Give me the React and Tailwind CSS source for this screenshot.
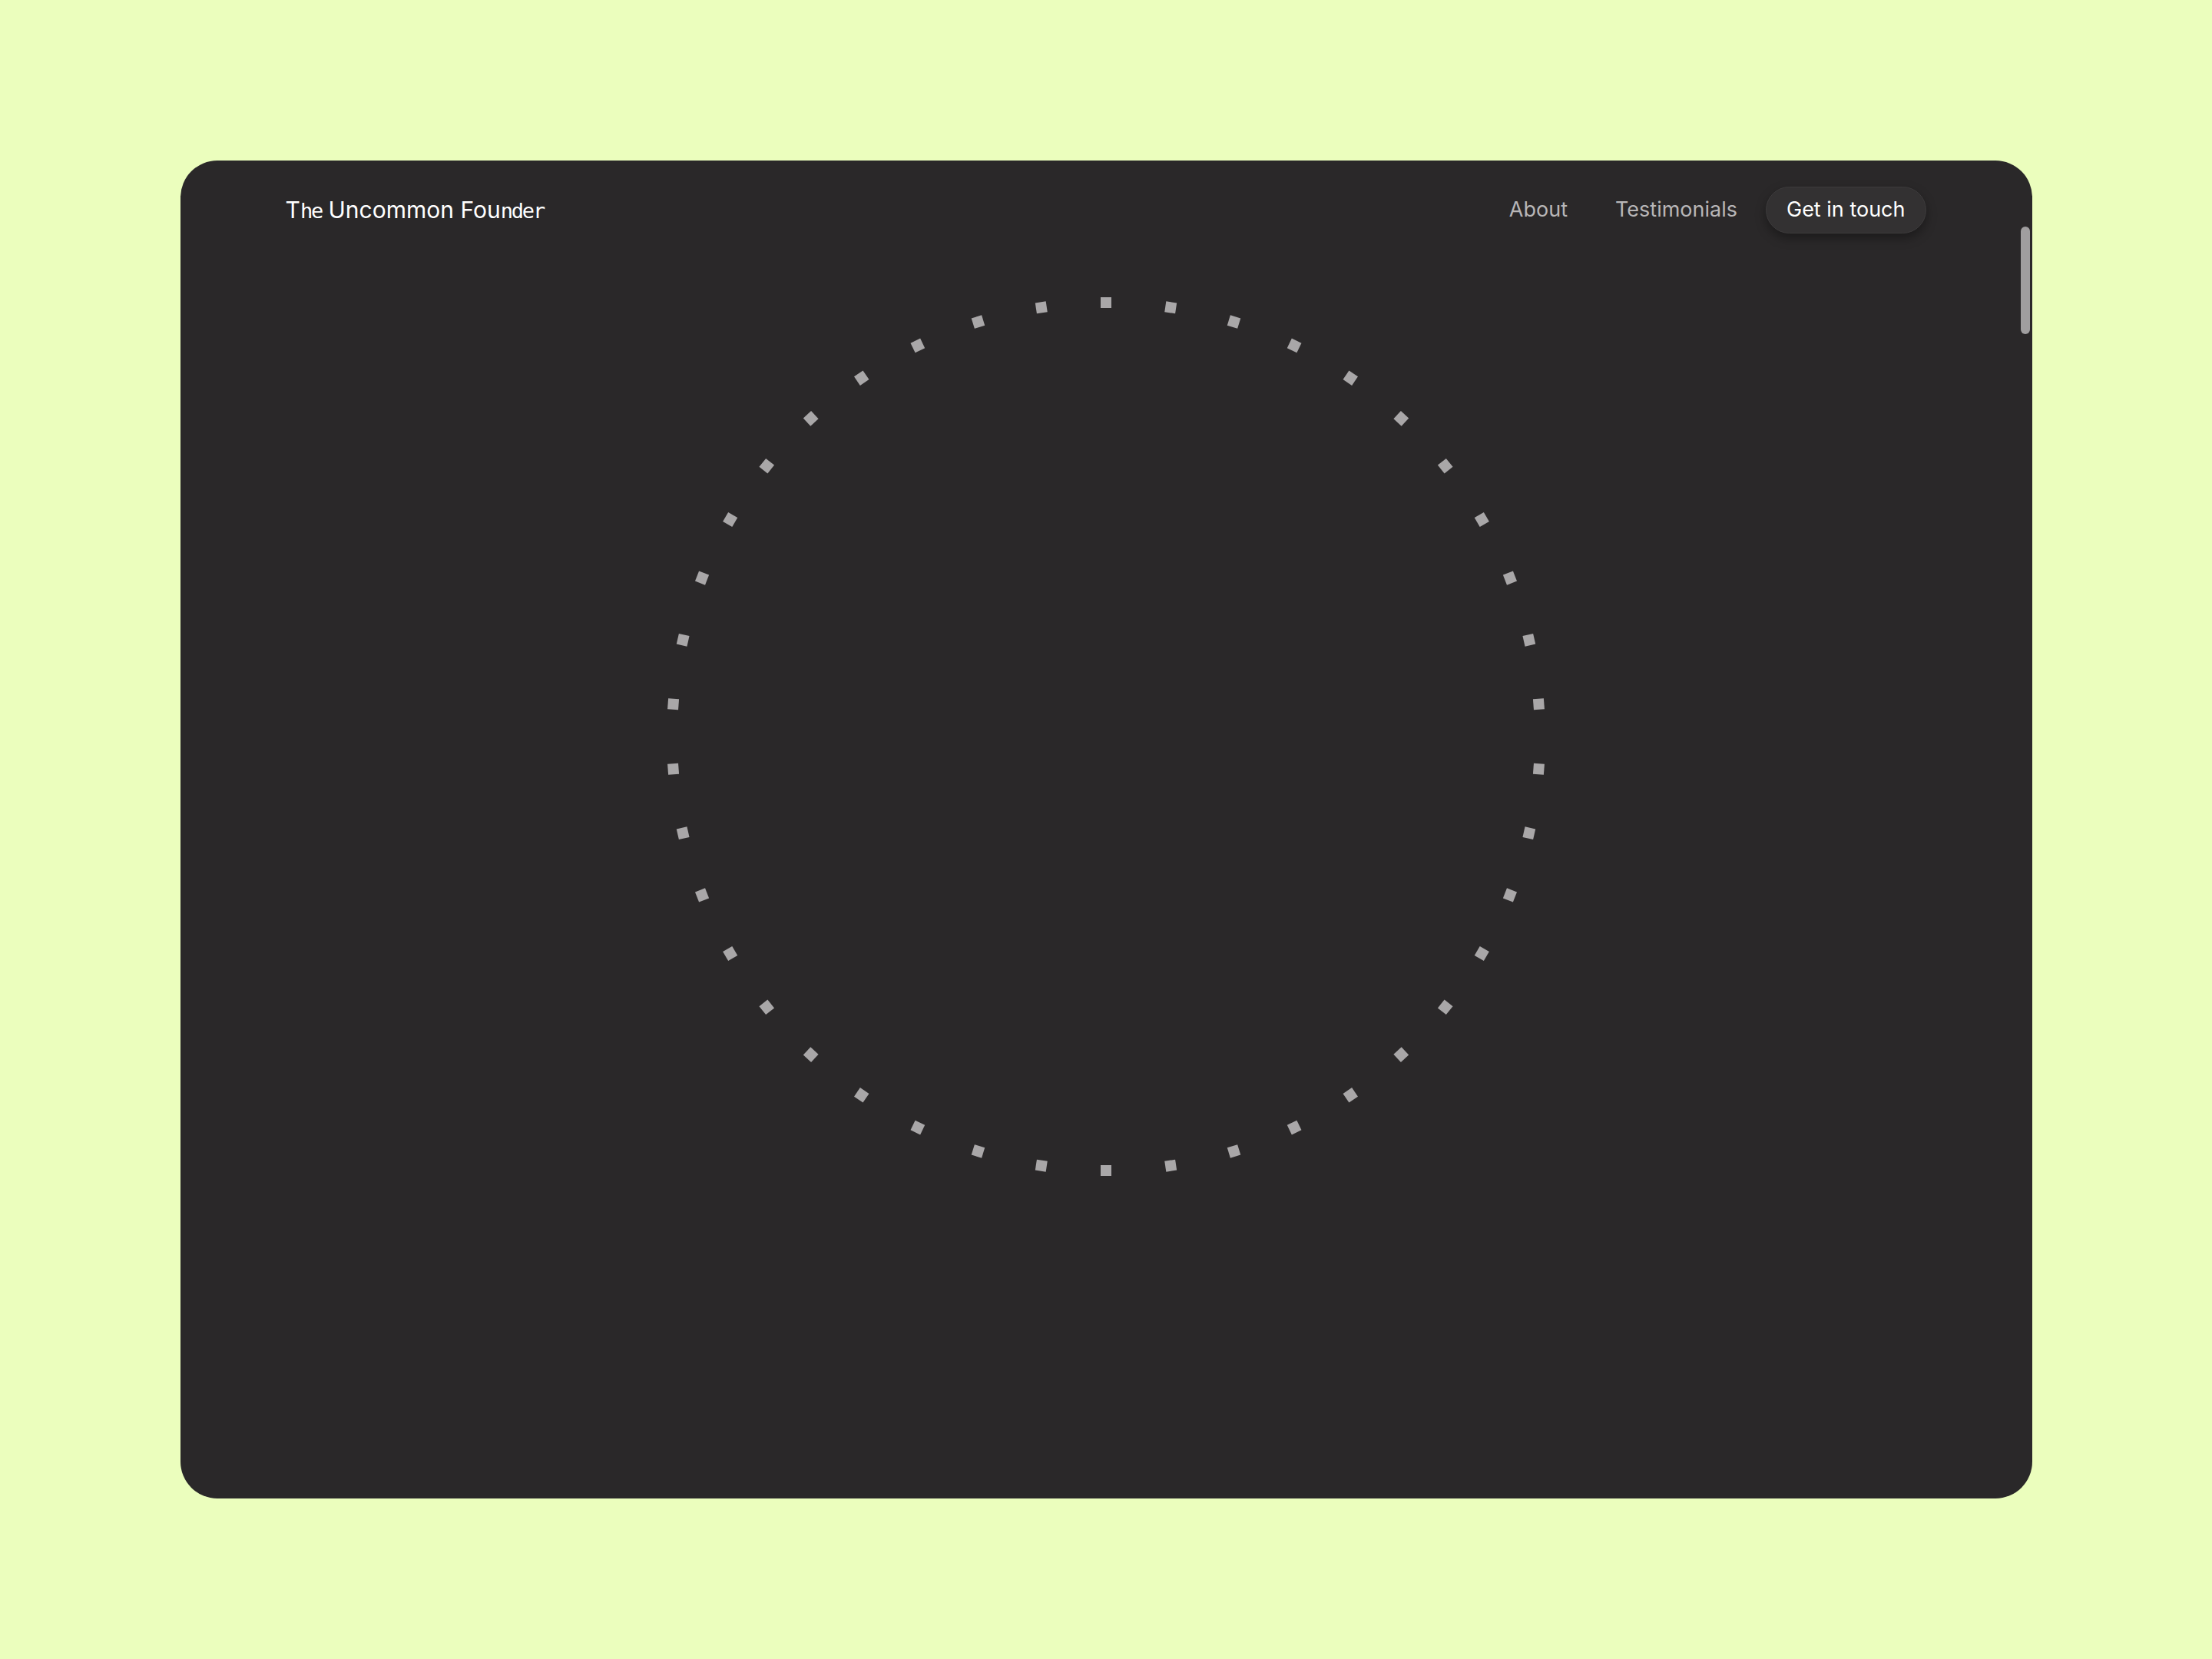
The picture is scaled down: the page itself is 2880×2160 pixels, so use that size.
const DOTS = 42;

function DotRing() {
  const size = 1160;
  const c = size / 2;
  const r = 565;
  const dots = Array.from({ length: DOTS }, (_, i) => {
    const deg = -90 + (360 / DOTS) * i;
    const rad = (deg * Math.PI) / 180;
    return { x: c + r * Math.cos(rad), y: c + r * Math.sin(rad), deg };
  });

  return (
    <svg width={size} height={size} viewBox={`0 0 ${size} ${size}`}>
      {dots.map((d, i) => (
        <rect
          key={i}
          x={d.x - 7}
          y={d.y - 7}
          width="14"
          height="14"
          fill="#a9a7a8"
          transform={`rotate(${d.deg + 90} ${d.x} ${d.y})`}
        />
      ))}
    </svg>
  );
}

export default function App() {
  return (
    <div className="w-full h-screen bg-[#ebfebd] flex items-center justify-center">
      <div className="relative w-[2411px] h-[1742px] bg-[#2a2829] rounded-[48px] overflow-hidden font-['Inter',sans-serif]">
        {/* Header */}
        <header className="flex items-center justify-between pl-[137px] pr-[138px] pt-[34px]">
          <a className="text-[30px] text-white">
            T<span className="font-['DejaVu_Sans_Mono',monospace] text-[27px] tracking-[-0.08em]">he</span> Uncommon Fou
            <span className="font-['DejaVu_Sans_Mono',monospace] text-[27px] tracking-[-0.08em]">nder</span>
          </a>
          <nav className="flex items-center text-[27px]">
            <a className="text-[#b8b6b7] mr-[62px]">About</a>
            <a className="text-[#b8b6b7] mr-[37px]">Testimonials</a>
            <button className="h-[61px] px-[26px] rounded-full bg-[#333132] border border-[#3d3b3c] shadow-[0_6px_14px_rgba(0,0,0,0.35)] text-white">
              Get in touch
            </button>
          </nav>
        </header>

        {/* Hero ring */}
        <div className="flex justify-center mt-[75px]">
          <DotRing />
        </div>

        {/* Scrollbar thumb */}
        <div className="absolute right-[3px] top-[86px] w-[12px] h-[140px] rounded-full bg-[#a09e9f]" />
      </div>
    </div>
  );
}
